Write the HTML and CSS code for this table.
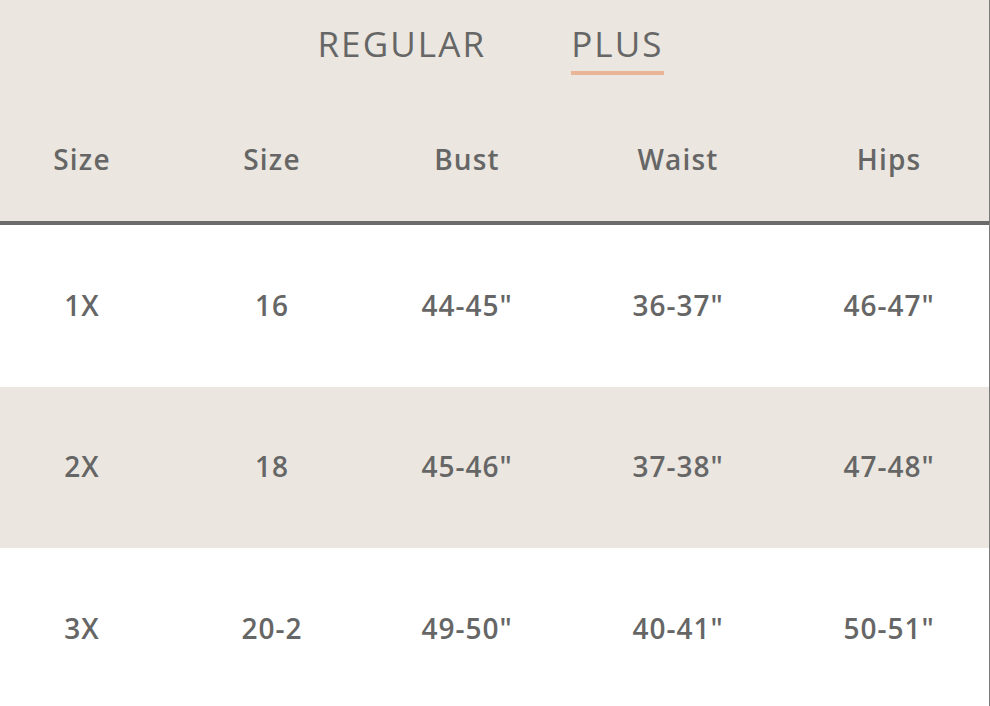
FILE: index.html
```html
<!DOCTYPE html>
<html lang="en">
<head>
<meta charset="utf-8">
<title>Size chart</title>
<link rel="stylesheet" href="styles.css">
</head>
<body>
<div class="chart">
  <div class="top">
    <nav class="tabs">
      <span class="tab">REGULAR</span>
      <span class="tab active">PLUS</span>
    </nav>
    <div class="row head">
      <div class="cell">Size</div>
      <div class="cell">Size</div>
      <div class="cell">Bust</div>
      <div class="cell">Waist</div>
      <div class="cell">Hips</div>
    </div>
  </div>
  <div class="row body">
    <div class="cell">1X</div>
    <div class="cell">16</div>
    <div class="cell">44-45"</div>
    <div class="cell">36-37"</div>
    <div class="cell">46-47"</div>
  </div>
  <div class="row body alt">
    <div class="cell">2X</div>
    <div class="cell">18</div>
    <div class="cell">45-46"</div>
    <div class="cell">37-38"</div>
    <div class="cell">47-48"</div>
  </div>
  <div class="row body">
    <div class="cell">3X</div>
    <div class="cell">20-2</div>
    <div class="cell">49-50"</div>
    <div class="cell">40-41"</div>
    <div class="cell">50-51"</div>
  </div>
</div>
</body>
</html>
```
FILE: styles.css
```css
html, body {
  margin: 0;
  padding: 0;
  background: #ffffff;
}

body {
  font-family: "Open Sans", "Noto Sans", sans-serif;
  color: #666666;
  overflow: hidden;
}

.chart {
  width: 989px;
  height: 706px;
  border-right: 1px solid #7a7a7a;
  overflow: hidden;
}

.top {
  background: #ebe6e0;
  border-bottom: 4px solid #6b6b6b;
}

.tabs {
  display: flex;
  justify-content: center;
  gap: 85px;
  padding: 22px 10px 0 0;
  height: 78px;
  box-sizing: content-box;
}

.tab {
  font-size: 35px;
  font-weight: 400;
  letter-spacing: 2.1px;
  line-height: 44px;
  height: 53px;
  color: #666666;
  box-sizing: border-box;
}

.tab.active {
  border-bottom: 4px solid #e8b597;
  margin-right: -2px;
}

.row {
  display: grid;
  grid-template-columns: 164px 216px 174px 248px 174px 1fr;
  align-items: center;
}

.cell {
  text-align: center;
  font-size: 28px;
  font-weight: 600;
  letter-spacing: 1px;
  white-space: nowrap;
}

.head {
  height: 121px;
  padding-bottom: 3px;
  box-sizing: border-box;
}

.head .cell {
  font-weight: 600;
  letter-spacing: 1.2px;
}

.body {
  height: 162px;
  padding-bottom: 3px;
  box-sizing: border-box;
}

.alt {
  background: #ebe6e0;
  height: 161px;
}
```
